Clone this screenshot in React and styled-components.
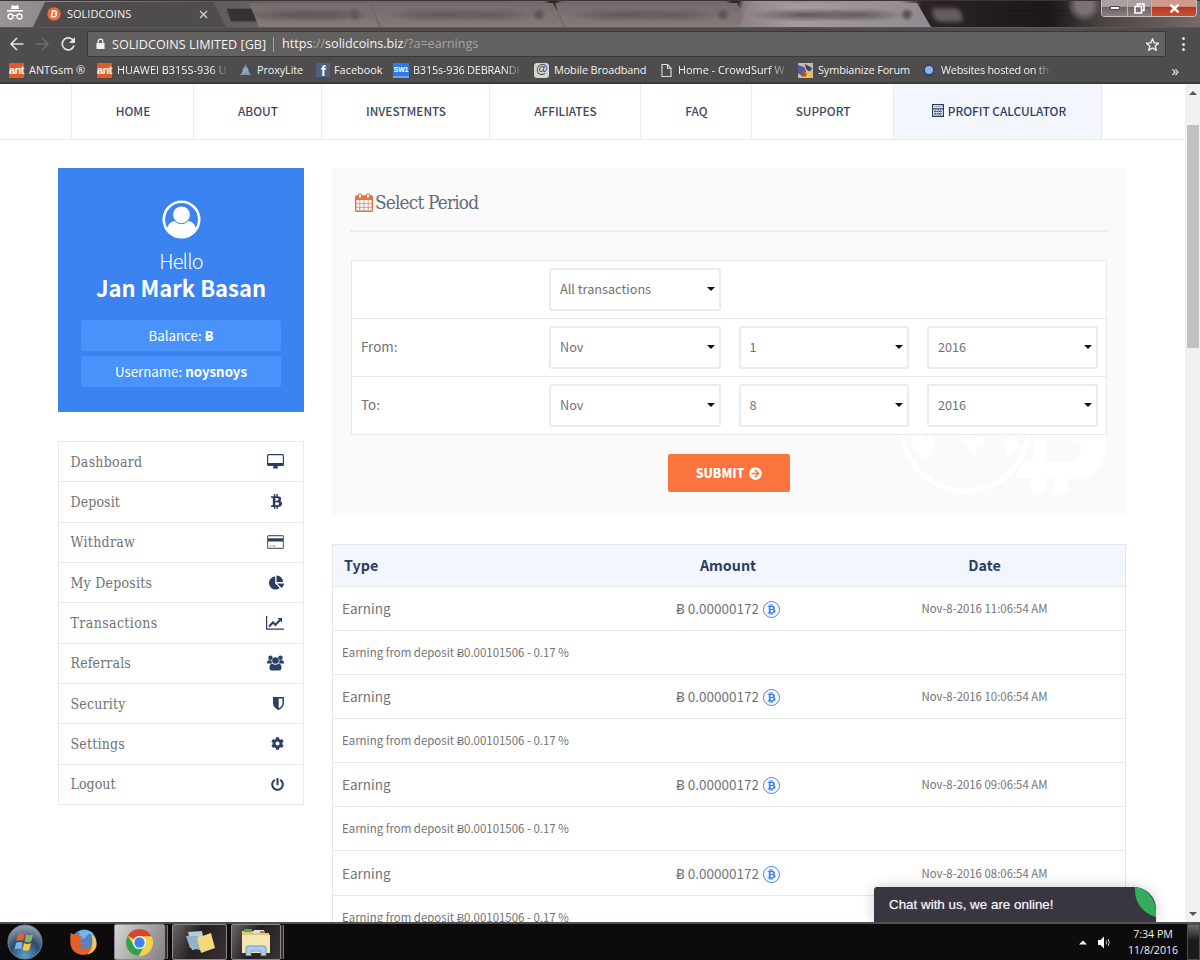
import React, { useState } from "react";
import styled, { createGlobalStyle, css } from "styled-components";
import {
  FaBtc,
  FaChartPie,
  FaCog,
  FaPowerOff,
  FaArrowCircleRight,
} from "react-icons/fa";

const FONT_SITE = '"Noto Sans CJK SC", "Noto Sans", sans-serif';
const FONT_SLAB = '"DejaVu Serif Condensed", "DejaVu Serif", serif';
const FONT_SYSTEM = '"Open Sans", "Noto Sans", sans-serif';
const LINE = "#e6eaeb";
const NAVY = "#2c3e63";
const GREY = "#727476";

const GlobalStyle = createGlobalStyle`
  * {
    box-sizing: border-box;
  }
  body {
    margin: 0;
    overflow: hidden;
  }
  svg {
    display: block;
    flex: none;
  }
`;

const Desktop = styled.div`
  width: 1200px;
  height: 960px;
  display: flex;
  flex-direction: column;
  overflow: hidden;
  background: #fff;
  font-family: ${FONT_SITE};
`;

/* ---------- browser window ---------- */

const TitleBar = styled.div`
  height: 27px;
  display: flex;
  align-items: flex-end;
  position: relative;
  flex: none;
  border-top: 1px solid #3c3537;
  background:
    radial-gradient(circle at 1084px 4px, #7b7172 0 8px, transparent 17px),
    radial-gradient(ellipse at 1030px 10px, #171113 0, transparent 60px),
    radial-gradient(ellipse 9px 12px at 553px 0, #2c2426 30%, transparent),
    radial-gradient(ellipse 9px 12px at 735px 0, #2c2426 30%, transparent),
    linear-gradient(
      90deg,
      #9b9296 0,
      #8d8587 60px,
      #625a5b 215px,
      #6f6666 300px,
      #756b6b 730px,
      #9a8f91 760px,
      #9a8f91 900px,
      #2b2325 922px,
      #1d1719 1050px,
      #4a4141 1100px,
      #756a69 1200px
    );
`;

const Incognito = styled.div`
  width: 33px;
  height: 26px;
  display: flex;
  justify-content: center;
  padding: 3px 3px 0 0;
`;

const ActiveTab = styled.div`
  width: 193px;
  height: 25px;
  display: flex;
  align-items: center;
  padding: 0 18px 1px 14px;
  color: #f1f1f1;
  font: 11px/16px ${FONT_SYSTEM};
  background: #4e4c4c;
  clip-path: polygon(0 100%, 12px 0, 180px 0, 100% 100%);
  svg:last-child {
    margin-left: auto;
  }
`;

const TabTitle = styled.span`
  margin-left: 6px;
`;

const OtherTab = styled.div`
  height: 24px;
  width: ${(p) => p.$width}px;
  margin-left: -8px;
  clip-path: polygon(0 0, calc(100% - 10px) 0, 100% 100%, 10px 100%);
  background:
    radial-gradient(ellipse 60px 7px at 35% 50%, #5f5757, transparent),
    radial-gradient(ellipse 50px 7px at 62% 50%, #635a5a, transparent),
    radial-gradient(circle at calc(100% - 24px) 48%, #5d5455 0 2px, transparent 7px),
    ${(p) =>
      p.$light
        ? "linear-gradient(90deg, #8c8384, #a69b9d 30%, #918a91)"
        : "linear-gradient(#756b6c, #857a79)"};
  ${(p) => p.$light && "clip-path: polygon(10px 0, calc(100% - 14px) 0, 100% 100%, 0 100%);"}
`;

const GhostTab = styled.div`
  width: 29px;
  height: 14px;
  margin: 0 0 5px 2px;
  background: ${(p) => (p.$light ? "#655d5e" : "#343132")};
  border: 1px solid #57504f;
  border-radius: ${(p) => (p.$light ? "5px" : "1px")};
  filter: blur(${(p) => (p.$light ? "2px" : "0.4px")});
  transform: skewX(18deg);
`;

const WindowButtons = styled.div`
  position: absolute;
  top: -1px;
  right: 3px;
  height: 17px;
  display: flex;
  border: 1px solid #c6bfbf;
  border-top: 0;
  border-radius: 0 0 4px 4px;
  overflow: hidden;
`;

const WindowButton = styled.div`
  width: ${(p) => (p.$close ? 44 : p.$wide ? 26 : 24)}px;
  display: flex;
  align-items: center;
  justify-content: center;
  border-right: ${(p) => (p.$close ? 0 : "1px solid #bdb5b5")};
  background: ${(p) =>
    p.$close
      ? "linear-gradient(#cf9a8c 0 40%, #b8361d 45%, #c55134)"
      : "linear-gradient(#aaa0a0 0 40%, #6c6262 45%, #8b8080)"};
`;

const Toolbar = styled.div`
  height: 30px;
  display: flex;
  align-items: center;
  padding: 3px 10px 0 9px;
  flex: none;
  background: #4e4c4c;
  border-top: 1px solid #5c5959;
`;

const NavButtons = styled.div`
  width: 78px;
  display: flex;
  align-items: center;
  gap: 11px;
`;

const AddressBar = styled.div`
  width: 1079px;
  height: 26px;
  display: flex;
  align-items: center;
  padding: 0 6px 0 8px;
  color: #f4f4f4;
  font: 12.6px/20px ${FONT_SYSTEM};
  background: #636060;
  border: 1px solid #3a3838;
`;

const SiteOwner = styled.span`
  margin-left: 7px;
  padding-right: 7px;
  line-height: 15px;
  letter-spacing: 0.02px;
  border-right: 1px solid #a3a1a1;
`;

const Url = styled.span`
  flex: 1;
  margin-left: 8px;
  i {
    font-style: normal;
    color: #a6a4a4;
  }
`;

const MenuDots = styled.div`
  width: 3px;
  height: 14px;
  margin-left: 16px;
  display: flex;
  flex-direction: column;
  justify-content: space-between;
  &::before,
  &::after,
  span {
    content: "";
    width: 3px;
    height: 3px;
    background: #e2e2e2;
    border-radius: 50%;
  }
`;

const BookmarksBar = styled.div`
  height: 27px;
  display: flex;
  align-items: center;
  padding: 1px 21px 0 9px;
  flex: none;
  color: #f3f3f3;
  font: 10.9px/16px ${FONT_SYSTEM};
  white-space: nowrap;
  background: #4e4c4c;
  border-bottom: 2px solid #3e3a3b;
`;

const Bookmark = styled.div`
  width: ${(p) => p.$width}px;
  display: flex;
  align-items: center;
  letter-spacing: ${(p) => p.$spacing || 0}px;
  flex: none;
`;

const BookmarkIcon = styled.span`
  width: ${(p) => p.$slot}px;
  flex: none;
`;

const BookmarkText = styled.span`
  ${(p) => p.$fade && "mask-image: linear-gradient(90deg, #000 86%, rgba(0, 0, 0, 0.2));"}
`;

const AntBadge = styled.span`
  display: block;
  width: 15px;
  height: 15px;
  color: #fff;
  text-align: center;
  font: bold 11px/14px "Liberation Sans", sans-serif;
  letter-spacing: -0.5px;
  background: #e2592a;
`;

const BlueBadge = styled(AntBadge)`
  width: 16px;
  font-size: 7px;
  letter-spacing: -0.3px;
  line-height: 13px;
  border-bottom: 2px solid #6da0ea;
  background: #2f7be8;
`;

const FacebookBadge = styled(AntBadge)`
  width: 14px;
  height: 14px;
  font-size: 14px;
  line-height: 16px;
  background: #4f6183;
`;

const AtBadge = styled(AntBadge)`
  color: #555;
  font-size: 12px;
  line-height: 13px;
  border-radius: 3px;
  background: #d6d4d2;
`;

const More = styled.span`
  margin-left: auto;
  font-size: 15px;
  line-height: 14px;
`;

/* ---------- site ---------- */

const Viewport = styled.div`
  height: 838px;
  display: flex;
  position: relative;
  overflow: hidden;
  flex: none;
`;

const Page = styled.div`
  flex: 1;
  min-width: 0;
  background: #fff;
`;

const SiteNav = styled.nav`
  height: 56px;
  display: flex;
  padding-left: 71px;
  border-bottom: 1px solid #e7eaec;
`;

const NavItem = styled.a`
  width: ${(p) => p.$width}px;
  display: flex;
  align-items: center;
  justify-content: center;
  gap: 4px;
  padding: 0 0 2px 1px;
  color: ${(p) => (p.$active ? NAVY : "#3c4960")};
  font-size: 11.8px;
  font-weight: 500;
  line-height: 16px;
  border-left: 1px solid #eceff1;
  ${(p) =>
    p.$active &&
    css`
      padding-left: 3px;
      background: #f3f7fd;
      border-right: 1px solid #e4e9ef;
    `}
`;

const Columns = styled.div`
  display: flex;
  align-items: flex-start;
  gap: 28px;
  padding: 28px 0 0 58px;
`;

const Sidebar = styled.aside`
  width: 246px;
  flex: none;
`;

const ProfileCard = styled.section`
  height: 244px;
  margin-bottom: 29px;
  padding: 32px 23px 0;
  display: flex;
  flex-direction: column;
  align-items: center;
  color: #fff;
  background: #3a83f1;
`;

const Hello = styled.div`
  margin-top: 8px;
  font-size: 20px;
  font-weight: 300;
  line-height: 27px;
  letter-spacing: -0.8px;
`;

const UserName = styled.div`
  margin-bottom: 19px;
  font-size: 22px;
  font-weight: 700;
  line-height: 27px;
`;

const ProfileStat = styled.div`
  width: 200px;
  height: 31px;
  margin-bottom: 5px;
  text-align: center;
  font-size: 13.3px;
  line-height: 31px;
  background: #4a92fb;
  border-radius: 2px;
`;

const Menu = styled.ul`
  margin: 0;
  padding: 0;
  list-style: none;
  border: 1px solid ${LINE};
  border-top: 0;
`;

const MenuItem = styled.li`
  height: 40.33px;
  display: flex;
  align-items: center;
  justify-content: space-between;
  padding: 0 19px 0 11.5px;
  color: #707274;
  font-family: ${FONT_SLAB};
  font-stretch: condensed;
  font-size: 14px;
  letter-spacing: ${(p) => p.$spacing}px;
  border-top: 1px solid ${LINE};
  svg {
    color: ${NAVY};
  }
`;

const Main = styled.main`
  width: 795px;
`;

const Panel = styled.section`
  height: 347px;
  margin-bottom: 29px;
  padding: 17px 19px 0 19px;
  position: relative;
  background: #fafafa;
`;

const PanelTitle = styled.h2`
  height: 47px;
  margin: 0 0 28px -1px;
  display: flex;
  gap: 2px;
  padding: 8px 0 0 5px;
  color: #636c78;
  font-family: ${FONT_SLAB};
  font-stretch: condensed;
  font-size: 18.8px;
  font-weight: 300;
  line-height: 19px;
  letter-spacing: -0.8px;
  border-bottom: 2px solid #ececec;
`;

const Watermark = styled.div`
  position: absolute;
  right: 20px;
  bottom: 20px;
  z-index: 0;
`;

const PeriodTable = styled.div`
  width: 756px;
  height: 175px;
  position: relative;
  z-index: 1;
  background: #fff;
  border: 1px solid ${LINE};
`;

const PeriodRow = styled.div`
  height: 58px;
  display: grid;
  grid-template-columns: 170px 171px 170px 170px;
  column-gap: 18.5px;
  align-items: center;
  padding: 0 0 1px 9px;
  color: #6f7274;
  font-size: 13.4px;
  line-height: 18px;
  & + & {
    border-top: 1px solid ${LINE};
  }
  &:first-child {
    height: 57px;
  }
`;

const PeriodLabel = styled.span`
  padding-bottom: 3px;
`;

const Select = styled.div`
  height: 43px;
  margin-left: -0.5px;
  display: flex;
  align-items: center;
  justify-content: space-between;
  padding: 0 6px 1px 9px;
  font-size: 12.7px;
  border: 2px solid #e8ecee;
  border-radius: 3px;
  &::after {
    content: "";
    margin-right: -2px;
    border: 4px solid transparent;
    border-top-color: #111;
    border-bottom: 0;
  }
`;

const SubmitButton = styled.button`
  width: 122px;
  height: 38px;
  margin: 19px auto 0 317px;
  display: flex;
  align-items: center;
  justify-content: center;
  gap: 5px;
  color: #fff;
  font: 900 12.3px/20px ${FONT_SITE};
  background: #fb743e;
  border: 0;
  border-radius: 2px;
`;

const EarningsTable = styled.div`
  width: 794px;
  border: 1px solid #e3e7ea;
`;

const EarningsRow = styled.div`
  height: 44.08px;
  display: grid;
  grid-template-columns: 279px 232px 1fr;
  align-items: center;
  justify-items: center;
  padding-bottom: 1px;
  color: ${GREY};
  font-size: 13.5px;
  line-height: 20px;
  border-top: 1px solid ${LINE};
`;

const EarningsHead = styled(EarningsRow)`
  height: 41px;
  color: ${NAVY};
  font-size: 14.3px;
  font-weight: 700;
  background: #f2f6fd;
  border-top: 0;
`;

const TypeCell = styled.span`
  justify-self: start;
  padding-left: ${(p) => (p.$head ? 11 : 9)}px;
`;

const NoteCell = styled(TypeCell)`
  grid-column: 1 / -1;
  font-size: 11.45px;
`;

const AmountCell = styled.span`
  display: flex;
  align-items: center;
  gap: 4px;
`;

const DateCell = styled.span`
  font-size: 11.4px;
`;

const CoinBadge = styled.span`
  width: 17px;
  height: 17px;
  margin-top: 3px;
  display: flex;
  align-items: center;
  justify-content: center;
  color: #3a83f1;
  font-size: 11px;
  border: 1.6px solid #3a83f1;
  border-radius: 50%;
`;

const Scrollbar = styled.div`
  width: 15px;
  display: flex;
  flex-direction: column;
  align-items: center;
  justify-content: space-between;
  padding: 7px 0 6px;
  background: #f1f1f1;
`;

const Thumb = styled.div`
  width: 12px;
  height: 223px;
  margin: -535px 0 0 0;
  background: #c1c1c1;
`;

const ScrollArrow = styled.span`
  border: 4px solid transparent;
  ${(p) =>
    p.$up
      ? "border-bottom-color: #555; border-top: 0;"
      : "border-top-color: #555; border-bottom: 0;"}
`;

const Chat = styled.div`
  position: absolute;
  left: 874px;
  bottom: 0;
  width: 282px;
  height: 35px;
  padding-left: 15px;
  color: #f2f2f2;
  font: 13.4px/36px "Liberation Sans", Arial, sans-serif;
  text-shadow: 0 0 1px #aaa;
  background: #3a3641;
  border-radius: 3px 22px 0 0;
  box-shadow: 0 0 14px rgba(0, 0, 0, 0.2);
  svg {
    position: absolute;
    top: 0;
    right: 0;
  }
`;

/* ---------- taskbar ---------- */

const Taskbar = styled.div`
  height: 38px;
  display: flex;
  align-items: center;
  flex: none;
  padding-left: 7px;
  color: #f0f0f0;
  background: #0e0b0c;
  border-top: 2px solid #545152;
`;

const Launcher = styled.div`
  width: ${(p) => p.$width}px;
  padding-left: ${(p) => p.$indent || 0}px;
  display: flex;
  justify-content: center;
`;

const TaskButton = styled.div`
  width: ${(p) => p.$width}px;
  height: 36px;
  margin-right: ${(p) => p.$gap}px;
  display: flex;
  align-items: center;
  justify-content: center;
  border: 1px solid #8c8989;
  border-radius: 2px;
  background: ${(p) =>
    p.$active
      ? "linear-gradient(115deg, #d6d4d4, #a9a5a5 55%, #878283)"
      : "linear-gradient(115deg, #6a6566, #242021 45%, #373233)"};
  ${(p) => p.$stacked && "box-shadow: 3px 0 0 -1px #353232, 4px 0 0 -1px #7b7778;"}
`;

const Tray = styled.div`
  margin-left: auto;
  display: flex;
  align-items: center;
  gap: 11px;
`;

const Clock = styled.div`
  width: 60px;
  margin-right: -7px;
  text-align: center;
  font: 10.6px/16px ${FONT_SYSTEM};
`;

const ShowDesktop = styled.div`
  width: 13px;
  height: 36px;
  border: 1px solid #4d4a4b;
  background: linear-gradient(#6d6a6b, #1d1a1b 45%);
`;

/* ---------- icons ---------- */

const UserCircleIcon = () => (
  <svg width="39" height="39" viewBox="0 0 39 39" fill="none">
    <path
      d="M5 29c1-5 4-8 8.500-8 3.500 2.800 8.500 2.800 12 0 4.500 0 7.500 3 8.500 8-6 10-23 10-29 0z"
      fill="#fff"
    />
    <circle cx="19.500" cy="19.500" r="17.700" stroke="#fff" strokeWidth="2.600" />
    <circle cx="19.500" cy="14.800" r="8.900" fill="#fff" stroke="#3a83f1" strokeWidth="1" />
  </svg>
);

const CalculatorIcon = () => (
  <svg width="12" height="13" viewBox="0 0 12 13" fill="none" stroke={NAVY}>
    <rect x=".6" y=".6" width="10.800" height="11.800" strokeWidth="1.200" />
    <path d="M1 4.800h10" strokeWidth="1.200" />
    <path d="M2.500 2.700h7" stroke="#8e9ab2" />
    <path d="M2 7.300h8M2 9.800h8" strokeWidth="1.300" strokeDasharray="1.600 .9" />
    <path d="M3.800 5v7M6.300 5v7M8.700 5v7" strokeWidth=".5" />
  </svg>
);

const CalendarIcon = () => (
  <svg width="18" height="19" viewBox="0 0 18 19" fill="none">
    <rect x=".7" y="3" width="16.600" height="15.300" rx="1" stroke="#e0703d" strokeWidth="1.400" />
    <path d="M1 3h16v4H1z" fill="#e8743f" />
    <path
      d="M1 10.600h16M1 14.300h16M4.800 7v11M9 7v11M13.200 7v11"
      stroke="#c99680"
      strokeWidth=".9"
    />
    <rect x="3.500" y=".7" width="3" height="4.600" rx="1.400" fill="#fafafa" stroke="#e0703d" />
    <rect x="11.500" y=".7" width="3" height="4.600" rx="1.400" fill="#fafafa" stroke="#e0703d" />
  </svg>
);

const MonitorIcon = () => (
  <svg width="17" height="15" viewBox="0 0 17 15" fill="none">
    <rect x=".6" y=".6" width="15.800" height="10.800" rx="1" stroke={NAVY} strokeWidth="1.200" />
    <path d="M1 9h15v2.500H1zM6.500 12h4l.5 2.600H6z" fill={NAVY} />
  </svg>
);

const CardIcon = () => (
  <svg width="17" height="14" viewBox="0 0 17 14" fill="none">
    <rect x=".6" y=".6" width="15.800" height="12.800" rx="1" stroke="#5d6472" strokeWidth="1.100" />
    <path d="M1 3.300h15v3.200H1z" fill={NAVY} />
    <path d="M2.500 11h2M5.500 11h3" stroke="#777" strokeWidth=".9" />
  </svg>
);

const LineChartIcon = () => (
  <svg width="18" height="14" viewBox="0 0 18 14" fill="none" stroke={NAVY}>
    <path d="M.6 0v13.200H18" strokeWidth="1.200" />
    <path d="M3 10.500l4-4 2.500 2.300L14 4" strokeWidth="2" />
    <path d="M11.500 2H16v4.500z" fill={NAVY} stroke="none" />
  </svg>
);

const UsersIcon = () => (
  <svg width="17" height="16" viewBox="0 0 17 16" fill={NAVY}>
    <circle cx="3.500" cy="2.800" r="2.200" />
    <circle cx="13.500" cy="2.800" r="2.200" />
    <circle cx="8.500" cy="5.500" r="3.300" />
    <path d="M0 8.500c0-2 .5-3.300 1.800-3.300h2.600c0 1.400.4 2.300 1.200 3.300zM17 8.500c0-2-.5-3.300-1.800-3.300h-2.600c0 1.400-.4 2.300-1.200 3.300z" />
    <path d="M2.500 12.500c0-2.300.9-3.700 2.700-3.700 2 1.300 4.600 1.300 6.600 0 1.800 0 2.700 1.400 2.700 3.700 0 1.700-.6 2.900-2 2.900h-8c-1.400 0-2-1.200-2-2.900z" />
  </svg>
);

const ShieldIcon = () => (
  <svg width="11" height="13" viewBox="0 0 11 13" fill="none">
    <path d="M.8.8h9.400v5.500c0 2.800-2.200 4.800-4.700 6C3 11.100.8 9.100.8 6.300z" stroke={NAVY} strokeWidth="1.500" />
    <path d="M1 1h4.700v11C3 10.800 1 9 1 6.300z" fill={NAVY} />
  </svg>
);

const WatermarkArt = () => (
  <svg width="212" height="130" viewBox="0 0 212 130" fill="#fff">
    <circle cx="70" cy="63" r="63" fill="none" stroke="#fff" strokeWidth="5" />
    <path d="M17 74l9-4 4 5 6-5 4 7-2 8-6 8-6 2-3-7-5-4zM66 71l10-2 3 4 9-2 3 8-8 3-2 9-6-3-3-9-7-4zM108 76l9-4 6 3 3 7-7 4-6 7-2-9z" />
    <path
      fillRule="evenodd"
      d="M138 50h60c8 6 13 14 13 26 0 24-10 37-28 37h-10v16h-15v-16h-8v16h-14v-16h-16l7-15h11zM150 75v22h22c18 0 18-22 6-22z"
    />
  </svg>
);

const StartOrb = () => (
  <svg width="36" height="36" viewBox="0 0 36 36">
    <defs>
      <radialGradient id="orb" cx=".5" cy=".9" r=".9">
        <stop offset="0" stopColor="#5aa3cb" />
        <stop offset=".5" stopColor="#2b4a6d" />
        <stop offset="1" stopColor="#9aa9b9" />
      </radialGradient>
    </defs>
    <circle cx="18" cy="18" r="17" fill="url(#orb)" stroke="#6f87a0" />
    <path d="M11 10.500c2-1.500 4.500-1.500 6.500-.5l-1.500 7c-2-1-4.500-1-6.500.3z" fill="#e8602f" />
    <path d="M19 10.500c2 1 4.800 1.200 7-.3l-1.600 7c-2 1.300-4.800 1.300-6.900.2z" fill="#8cb45b" />
    <path d="M9 19c2-1.400 4.600-1.300 6.600-.3l-1.500 6.600c-2-1-4.500-1-6.600.4z" fill="#7fb2e6" />
    <path d="M17 19.200c2.200 1.100 4.900 1 7-.3l-1.600 6.800c-2.200 1.300-4.800 1.300-7 .2z" fill="#fbc63c" />
  </svg>
);

const FirefoxIcon = () => (
  <svg width="29" height="29" viewBox="0 0 30 30">
    <circle cx="15.500" cy="14" r="12.500" fill="#4a86cb" />
    <path d="M10 4c4-3 12-3 16 3-5-2-8 0-9 3l-5 2z" fill="#76b5e8" />
    <path
      d="M2 5c1 1 2 1.500 3.500 1.500C8 5.500 10 6.500 11 8l3 1c0 2-3 3-3.500 4.500 1 2.500 4 2 6 1-1 4.500-5 4-7 3 2 4.500 10 5.500 14 0 2-3 1.500-6 0-9 3 2 4 4 4 8C27 31 3 32 1.500 16 1.300 12 1 9 2 5z"
      fill="#e0622a"
    />
    <path d="M23 6c5 3 6 8 5.500 12-1 5-4.500 8-9.500 9.500 5-5 6.500-13 4-21.500z" fill="#f0c560" />
  </svg>
);

const ChromeIcon = () => (
  <svg width="29" height="29" viewBox="0 0 30 30">
    <circle cx="15" cy="15" r="14" fill="#f6d24b" />
    <path d="M15 15L2.900 8A14 14 0 0 1 27.500 8.500L15 8.500z" fill="#d8452e" />
    <path d="M2.900 8A14 14 0 0 0 14 29l6.500-11L15 15 9.300 18z" fill="#35a04d" />
    <circle cx="15" cy="15" r="6.800" fill="#fff" />
    <circle cx="15" cy="15" r="5.400" fill="#3f83ec" />
  </svg>
);

const NotesIcon = () => (
  <svg width="32" height="28" viewBox="0 0 32 28">
    <path d="M4 4l14-1 3 16-13 3z" fill="#b3ccd6" />
    <path d="M2 8l12 0 2 14-10-2z" fill="#93b4c3" />
    <path d="M13 10l14-5 4 15-14 5z" fill="#f3d87c" />
  </svg>
);

const ExplorerIcon = () => (
  <svg width="32" height="28" viewBox="0 0 32 28">
    <path d="M2 3h12l2 2h13v20H2z" fill="#e2c777" />
    <path d="M4 1h8v3H4z" fill="#56a25a" />
    <path d="M14 2h10v3H14z" fill="#d9e5ee" />
    <path d="M20 3h5v2h-5z" fill="#d5683f" />
    <path d="M2 7h28v18H2z" fill="#f5e5b0" />
    <path d="M6 27.500v-7.500q0-2 2-2h16q2 0 2 2v7.500h-5V23H11v4.500z" fill="#a9cbe8" stroke="#6f9ac6" />
  </svg>
);

const bookmarks = [
  { width: 88, slot: 20, label: "ANTGsm ®", icon: <AntBadge>ant</AntBadge> },
  { width: 141, slot: 20, label: "HUAWEI B315S-936 U", fade: true, icon: <AntBadge>ant</AntBadge> },
  {
    width: 78,
    slot: 19,
    label: "ProxyLite",
    spacing: -0.12,
    icon: (
      <svg width="15" height="12" viewBox="0 0 15 12">
        <path d="M7.500 0l2 4H5.500z" fill="#8a8686" />
        <path d="M2 11l3-4 3 3.500zM13 11l-3-4-3 3.500z" fill="#a49d9d" />
        <circle cx="7.500" cy="6.500" r="3" fill="#86a5de" />
      </svg>
    ),
  },
  { width: 77, slot: 18, label: "Facebook", icon: <FacebookBadge>f</FacebookBadge> },
  { width: 141, slot: 20, label: "B315s-936 DEBRANDI", fade: true, spacing: -0.18, icon: <BlueBadge>SW1</BlueBadge> },
  { width: 127, slot: 20, label: "Mobile Broadband", spacing: -0.12, icon: <AtBadge>@</AtBadge> },
  {
    width: 137,
    slot: 17,
    label: "Home - CrowdSurf W",
    fade: true,
    icon: (
      <svg width="11" height="13" viewBox="0 0 11 14" fill="none" stroke="#e0e0e0" strokeWidth="1.200">
        <path d="M.6.6h6L10.400 4.500v8.900H.6zM6.500.6v4h4" />
      </svg>
    ),
  },
  {
    width: 125,
    slot: 20,
    label: "Symbianize Forum",
    spacing: -0.12,
    icon: (
      <svg width="15" height="15" viewBox="0 0 15 15">
        <path d="M0 0h15v15H0z" fill="#c9b9ae" />
        <path d="M0 2l6 2 2 4-3 6-5-4z" fill="#4a5c9b" />
        <path d="M7 1l7 4-2 4-4-3z" fill="#34447c" />
        <path d="M8 9l6-1v6H8z" fill="#f1c13e" />
        <path d="M4 7l5 4-2 3-4-3z" fill="#c7452f" />
      </svg>
    ),
  },
  {
    width: 128,
    slot: 18,
    label: "Websites hosted on th",
    fade: true,
    spacing: -0.26,
    icon: (
      <svg width="12" height="12" viewBox="0 0 12 12">
        <circle cx="6" cy="6" r="4.800" fill="#8fb0e8" stroke="#2a3f70" strokeWidth="1.500" />
      </svg>
    ),
  },
];

const navItems = [
  { label: "HOME", width: 122 },
  { label: "ABOUT", width: 128 },
  { label: "INVESTMENTS", width: 168 },
  { label: "AFFILIATES", width: 151 },
  { label: "FAQ", width: 111 },
  { label: "SUPPORT", width: 142 },
  { label: "PROFIT CALCULATOR", width: 209, active: true },
];

const menuItems = [
  { label: "Dashboard", spacing: 0.27, icon: <MonitorIcon /> },
  { label: "Deposit", spacing: 0.1, icon: <FaBtc size={15} /> },
  { label: "Withdraw", spacing: 0.3, icon: <CardIcon /> },
  { label: "My Deposits", spacing: 0.22, icon: <FaChartPie size={15} /> },
  { label: "Transactions", spacing: 0.4, icon: <LineChartIcon /> },
  { label: "Referrals", spacing: 0.15, icon: <UsersIcon /> },
  { label: "Security", spacing: 0.2, icon: <ShieldIcon /> },
  { label: "Settings", spacing: 0.2, icon: <FaCog size={13} /> },
  { label: "Logout", spacing: 0.05, icon: <FaPowerOff size={13} /> },
];

const earnings = ["11:06:54", "10:06:54", "09:06:54", "08:06:54"];

function Browser() {
  return (
    <>
      <TitleBar>
        <Incognito>
          <svg width="16" height="17" viewBox="0 0 16 17" fill="none">
            <path d="M4 5l1-4 3 1 3-1 1 4z" fill="#fff" />
            <path d="M0 6h16v1.600H0z" fill="#fff" />
            <circle cx="3.500" cy="12.500" r="2.500" stroke="#fff" strokeWidth="1.300" />
            <circle cx="12.500" cy="12.500" r="2.500" stroke="#fff" strokeWidth="1.300" />
            <path d="M6 12q2-1.200 4 0" stroke="#fff" />
          </svg>
        </Incognito>
        <ActiveTab>
          <svg width="14" height="14" viewBox="0 0 14 14">
            <circle cx="7" cy="7" r="6.800" fill="#ee6a35" />
            <path d="M5.500 4h2.600c2 .3 1.700 2.300.5 2.700 1.600.7.900 3-1.200 3H4.500z" fill="none" stroke="#fff" strokeWidth="1.400" />
          </svg>
          <TabTitle>SOLIDCOINS</TabTitle>
          <svg width="9" height="9" viewBox="0 0 9 9" stroke="#cfcdcd" strokeWidth="1.400">
            <path d="M1 1l7 7M8 1L1 8" />
          </svg>
        </ActiveTab>
        <GhostTab />
        <OtherTab $width={130} />
        <OtherTab $width={192} />
        <OtherTab $width={192} />
        <OtherTab $width={192} $light />
        <GhostTab $light />
        <WindowButtons>
          <WindowButton $wide>
            <svg width="10" height="4" viewBox="0 0 10 4">
              <path d="M.5.5h9v3h-9z" fill="#fff" stroke="#4d4646" />
            </svg>
          </WindowButton>
          <WindowButton>
            <svg width="11" height="11" viewBox="0 0 11 11" fill="none" stroke="#fff" strokeWidth="1.600">
              <path d="M3.500 3V1h6.500v6.500H8M1 3.500h6.500V10H1z" />
            </svg>
          </WindowButton>
          <WindowButton $close>
            <svg width="11" height="9" viewBox="0 0 11 9" stroke="#fff" strokeWidth="2.500">
              <path d="M1.500.5l8 8M9.500.5l-8 8" />
            </svg>
          </WindowButton>
        </WindowButtons>
      </TitleBar>
      <Toolbar>
        <NavButtons>
          <svg width="15" height="14" viewBox="0 0 15 14" fill="none" stroke="#e4e4e4" strokeWidth="1.600">
            <path d="M14.500 7H2M8 1L2 7l6 6" />
          </svg>
          <svg width="15" height="14" viewBox="0 0 15 14" fill="none" stroke="#6f6d6d" strokeWidth="1.600">
            <path d="M.5 7H13M7 1l6 6-6 6" />
          </svg>
          <svg width="15" height="14" viewBox="0 0 15 14" fill="none">
            <path d="M12.500 4A6 6 0 1 0 13 8.500" stroke="#e4e4e4" strokeWidth="1.700" />
            <path d="M14 0v6H8z" fill="#e4e4e4" />
          </svg>
        </NavButtons>
        <AddressBar>
          <svg width="9" height="12" viewBox="0 0 10 12" fill="none">
            <path d="M.5 5h9v6.500h-9z" fill="#f5f5f5" />
            <path d="M2.500 5V3a2.500 2.500 0 0 1 5 0v2" stroke="#f5f5f5" strokeWidth="1.400" />
          </svg>
          <SiteOwner>SOLIDCOINS LIMITED [GB]</SiteOwner>
          <Url>
            https<i>://</i>solidcoins.biz<i>/?a=earnings</i>
          </Url>
          <svg width="13" height="13" viewBox="0 0 24 24" fill="none" stroke="#efefef" strokeWidth="2.600">
            <path d="M12 2l3 7 8 .7-6 5.200 1.800 7.600L12 18.400l-6.800 4.100L7 14.900 1 9.700 9 9z" />
          </svg>
        </AddressBar>
        <MenuDots>
          <span />
        </MenuDots>
      </Toolbar>
      <BookmarksBar>
        {bookmarks.map((b) => (
          <Bookmark key={b.label} $width={b.width} $spacing={b.spacing}>
            <BookmarkIcon $slot={b.slot}>{b.icon}</BookmarkIcon>
            <BookmarkText $fade={b.fade}>{b.label}</BookmarkText>
          </Bookmark>
        ))}
        <More>»</More>
      </BookmarksBar>
    </>
  );
}

function PeriodForm() {
  return (
    <Panel>
      <PanelTitle>
        <CalendarIcon />
        Select Period
      </PanelTitle>
      <Watermark>
        <WatermarkArt />
      </Watermark>
      <PeriodTable>
        <PeriodRow>
          <span />
          <Select>All transactions</Select>
        </PeriodRow>
        <PeriodRow>
          <PeriodLabel>From:</PeriodLabel>
          <Select>Nov</Select>
          <Select>1</Select>
          <Select>2016</Select>
        </PeriodRow>
        <PeriodRow>
          <PeriodLabel>To:</PeriodLabel>
          <Select>Nov</Select>
          <Select>8</Select>
          <Select>2016</Select>
        </PeriodRow>
      </PeriodTable>
      <SubmitButton>
        SUBMIT <FaArrowCircleRight size={13} />
      </SubmitButton>
    </Panel>
  );
}

function Earnings() {
  return (
    <EarningsTable>
      <EarningsHead>
        <TypeCell $head>Type</TypeCell>
        <span>Amount</span>
        <span>Date</span>
      </EarningsHead>
      {earnings.map((time) => (
        <React.Fragment key={time}>
          <EarningsRow>
            <TypeCell>Earning</TypeCell>
            <AmountCell>
              Ƀ 0.00000172
              <CoinBadge>
                <FaBtc />
              </CoinBadge>
            </AmountCell>
            <DateCell>Nov-8-2016 {time} AM</DateCell>
          </EarningsRow>
          <EarningsRow>
            <NoteCell>Earning from deposit Ƀ0.00101506 - 0.17 %</NoteCell>
          </EarningsRow>
        </React.Fragment>
      ))}
    </EarningsTable>
  );
}

export default function App() {
  const [isChatOpen, setIsChatOpen] = useState(true);
  const handleChatClick = () => setIsChatOpen(!isChatOpen);

  return (
    <Desktop>
      <GlobalStyle />
      <Browser />
      <Viewport>
        <Page>
          <SiteNav>
            {navItems.map((item) => (
              <NavItem key={item.label} $width={item.width} $active={item.active}>
                {item.active && <CalculatorIcon />}
                {item.label}
              </NavItem>
            ))}
          </SiteNav>
          <Columns>
            <Sidebar>
              <ProfileCard>
                <UserCircleIcon />
                <Hello>Hello</Hello>
                <UserName>Jan Mark Basan</UserName>
                <ProfileStat>
                  Balance: <b>Ƀ</b>
                </ProfileStat>
                <ProfileStat>
                  Username: <b>noysnoys</b>
                </ProfileStat>
              </ProfileCard>
              <Menu>
                {menuItems.map((item) => (
                  <MenuItem key={item.label} $spacing={item.spacing}>
                    {item.label}
                    {item.icon}
                  </MenuItem>
                ))}
              </Menu>
            </Sidebar>
            <Main>
              <PeriodForm />
              <Earnings />
            </Main>
          </Columns>
        </Page>
        <Scrollbar>
          <ScrollArrow $up />
          <Thumb />
          <ScrollArrow />
        </Scrollbar>
        {isChatOpen && (
          <Chat onClick={handleChatClick}>
            Chat with us, we are online!
            <svg width="21" height="30" viewBox="0 0 21 30">
              <path d="M0 0c13 1 22 13 21 30C8 26-1 16 0 0z" fill="#35ab5d" />
            </svg>
          </Chat>
        )}
      </Viewport>
      <Taskbar>
        <Launcher $width={36}>
          <StartOrb />
        </Launcher>
        <Launcher $width={71} $indent={9}>
          <FirefoxIcon />
        </Launcher>
        <TaskButton $width={51} $gap={7} $active $stacked>
          <ChromeIcon />
        </TaskButton>
        <TaskButton $width={55} $gap={4}>
          <NotesIcon />
        </TaskButton>
        <TaskButton $width={50} $gap={0} $stacked>
          <ExplorerIcon />
        </TaskButton>
        <Tray>
          <svg width="8" height="5" viewBox="0 0 8 5">
            <path d="M0 4.500L4 .5l4 4z" fill="#fff" />
          </svg>
          <svg width="14" height="13" viewBox="0 0 14 13" fill="none">
            <path d="M0 4h2.500L6 .5v12L2.500 9H0z" fill="#fff" />
            <path d="M8 4.500q1.500 2 0 4M10 3q2.500 3.500 0 7" stroke="#ccc" />
          </svg>
          <Clock>
            7:34 PM
            <br />
            11/8/2016
          </Clock>
          <ShowDesktop />
        </Tray>
      </Taskbar>
    </Desktop>
  );
}
